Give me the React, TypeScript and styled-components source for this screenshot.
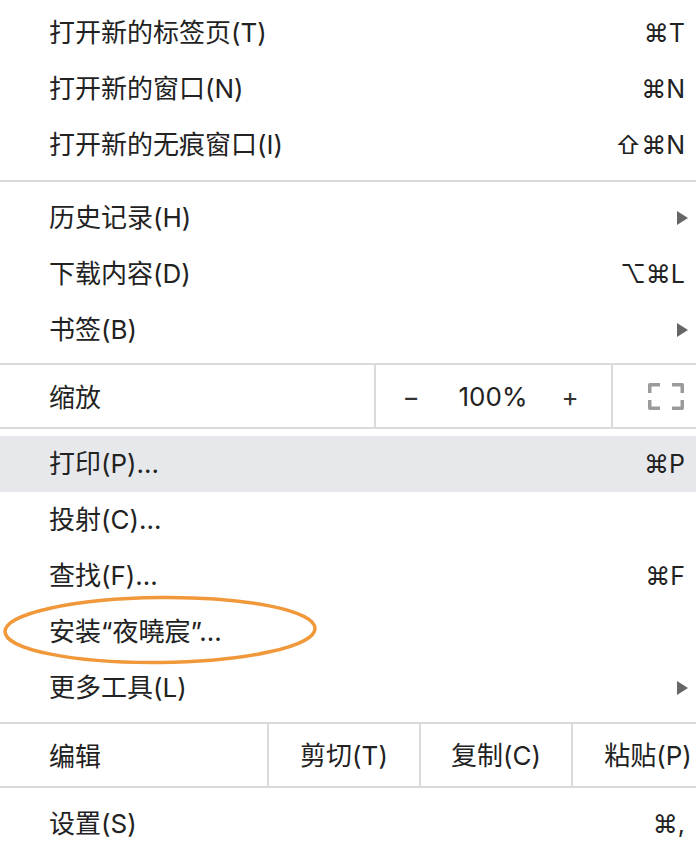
import React from "react";
import styled, { createGlobalStyle } from "styled-components";

const Global = createGlobalStyle`
  html, body { margin: 0; padding: 0; background: #ffffff; }
  body { overflow: hidden; width: 696px; height: 858px; }
  * { box-sizing: border-box; }
`;

const Menu = styled.div`
  position: relative;
  width: 696px;
  height: 858px;
  overflow: hidden;
  background: #ffffff;
  font-family: "Inter", "Noto Sans CJK SC", "DejaVu Sans", sans-serif;
  font-size: 26px;
  line-height: 26px;
  color: #222222;
`;

const Group = styled.div<{ $top: number; $bottom: number }>`
  display: flex;
  flex-direction: column;
  padding-top: ${(p) => p.$top}px;
  padding-bottom: ${(p) => p.$bottom}px;
`;

const Separator = styled.div`
  height: 2px;
  background: #dadada;
`;

const Row = styled.div<{ $active?: boolean }>`
  height: 56px;
  display: flex;
  align-items: center;
  justify-content: space-between;
  padding: 0 11px 0 49px;
  background: ${(p) => (p.$active ? "#e7e8ec" : "transparent")};
`;

const Label = styled.span`
  white-space: nowrap;
`;

const Shortcut = styled.span`
  white-space: nowrap;
  font-size: 25px;
  font-family: "Inter", "DejaVu Sans", "Noto Sans CJK SC", sans-serif;
`;

const Arrow = styled.span`
  width: 0;
  height: 0;
  margin-right: -3px;
  border-top: 7.5px solid transparent;
  border-bottom: 7.5px solid transparent;
  border-left: 11px solid #666666;
`;

const SplitRow = styled.div<{ $cols: string }>`
  height: 62px;
  display: grid;
  grid-template-columns: ${(p) => p.$cols};
  overflow: hidden;
`;

const SplitLabel = styled.div`
  display: flex;
  align-items: center;
  padding: 3px 0 0 49px;
  white-space: nowrap;
`;

const SplitCell = styled.div`
  display: flex;
  align-items: center;
  justify-content: center;
  padding-top: 2px;
  border-left: 2px solid #dadada;
  white-space: nowrap;
`;

const ZoomCell = styled.div`
  display: grid;
  grid-template-columns: 70px 94px 60px;
  align-items: center;
  padding-top: 2px;
  border-left: 2px solid #dadada;
`;

const ZoomBtn = styled.span`
  text-align: center;
  color: #333333;
`;

const ZoomValue = styled.span`
  text-align: center;
`;

const FullCell = styled.div`
  display: flex;
  align-items: center;
  padding-left: 35px;
  border-left: 2px solid #dadada;
`;

const Annotation = styled.svg`
  position: absolute;
  left: 0;
  top: 590px;
  pointer-events: none;
`;

const FullscreenIcon = () => (
  <svg width="36" height="27" viewBox="0 0 36 27" fill="none">
    <g stroke="#9b9b9b" strokeWidth="3.5" strokeLinejoin="round">
      <path d="M1.75 10 V1.75 H12" />
      <path d="M24 1.75 H34.25 V10" />
      <path d="M1.75 17 V25.25 H12" />
      <path d="M24 25.25 H34.25 V17" />
    </g>
  </svg>
);

type Item = { label: string; shortcut?: string; arrow?: boolean; active?: boolean };

const group1: Item[] = [
  { label: "打开新的标签页(T)", shortcut: "⌘T" },
  { label: "打开新的窗口(N)", shortcut: "⌘N" },
  { label: "打开新的无痕窗口(I)", shortcut: "⇧⌘N" },
];

const group2: Item[] = [
  { label: "历史记录(H)", arrow: true },
  { label: "下载内容(D)", shortcut: "⌥⌘L" },
  { label: "书签(B)", arrow: true },
];

const group3: Item[] = [
  { label: "打印(P)...", shortcut: "⌘P", active: true },
  { label: "投射(C)..." },
  { label: "查找(F)...", shortcut: "⌘F" },
  { label: "安装“夜曉宸”..." },
  { label: "更多工具(L)", arrow: true },
];

const renderItems = (items: Item[]) =>
  items.map((it) => (
    <Row key={it.label} $active={it.active}>
      <Label>{it.label}</Label>
      {it.shortcut && <Shortcut>{it.shortcut}</Shortcut>}
      {it.arrow && <Arrow />}
    </Row>
  ));

export default function App() {
  return (
    <>
      <Global />
      <Menu>
        <Group $top={5} $bottom={7}>{renderItems(group1)}</Group>
        <Separator />
        <Group $top={8} $bottom={5}>{renderItems(group2)}</Group>
        <Separator />
        <SplitRow $cols="374px 237px 110px">
          <SplitLabel>缩放</SplitLabel>
          <ZoomCell>
            <ZoomBtn>−</ZoomBtn>
            <ZoomValue>100%</ZoomValue>
            <ZoomBtn>+</ZoomBtn>
          </ZoomCell>
          <FullCell>
            <FullscreenIcon />
          </FullCell>
        </SplitRow>
        <Separator />
        <Group $top={7} $bottom={6}>{renderItems(group3)}</Group>
        <Separator />
        <SplitRow $cols="267px 152px 152px 152px">
          <SplitLabel>编辑</SplitLabel>
          <SplitCell>剪切(T)</SplitCell>
          <SplitCell>复制(C)</SplitCell>
          <SplitCell>粘贴(P)</SplitCell>
        </SplitRow>
        <Separator />
        <Group $top={8} $bottom={8}>
          <Row>
            <Label>设置(S)</Label>
            <Shortcut>⌘,</Shortcut>
          </Row>
        </Group>
        <Annotation width="330" height="80" viewBox="0 0 330 80">
          <ellipse
            cx="160"
            cy="40"
            rx="155"
            ry="32.5"
            fill="none"
            stroke="#f0983a"
            strokeWidth="3.5"
            transform="rotate(-0.6 160 40)"
          />
        </Annotation>
      </Menu>
    </>
  );
}
